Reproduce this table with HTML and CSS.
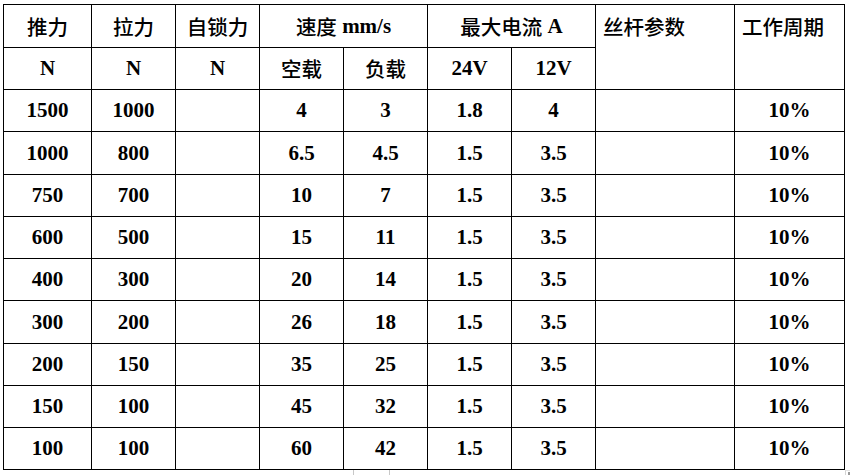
FILE: index.html
```html
<!DOCTYPE html>
<html lang="zh-CN">
<head>
<meta charset="utf-8">
<title>推拉力参数表</title>
<link rel="stylesheet" href="styles.css">
</head>
<body>
<div class="page">
  <div class="sheet">
    <div class="c"><span class="zh">推力</span></div>
    <div class="c"><span class="zh">拉力</span></div>
    <div class="c"><span class="zh">自锁力</span></div>
    <div class="c span2"><span class="zh">速度</span>&nbsp;mm/s</div>
    <div class="c span2"><span class="zh">最大电流</span>&nbsp;A</div>
    <div class="c tall"><span class="zh">丝杆参数</span></div>
    <div class="c tall"><span class="zh">工作周期</span></div>

    <div class="c">N</div>
    <div class="c">N</div>
    <div class="c">N</div>
    <div class="c"><span class="zh">空载</span></div>
    <div class="c"><span class="zh">负载</span></div>
    <div class="c">24V</div>
    <div class="c">12V</div>

    <div class="c">1500</div><div class="c">1000</div><div class="c"></div><div class="c">4</div><div class="c">3</div><div class="c">1.8</div><div class="c">4</div><div class="c"></div><div class="c">10%</div>
    <div class="c">1000</div><div class="c">800</div><div class="c"></div><div class="c">6.5</div><div class="c">4.5</div><div class="c">1.5</div><div class="c">3.5</div><div class="c"></div><div class="c">10%</div>
    <div class="c">750</div><div class="c">700</div><div class="c"></div><div class="c">10</div><div class="c">7</div><div class="c">1.5</div><div class="c">3.5</div><div class="c"></div><div class="c">10%</div>
    <div class="c">600</div><div class="c">500</div><div class="c"></div><div class="c">15</div><div class="c">11</div><div class="c">1.5</div><div class="c">3.5</div><div class="c"></div><div class="c">10%</div>
    <div class="c">400</div><div class="c">300</div><div class="c"></div><div class="c">20</div><div class="c">14</div><div class="c">1.5</div><div class="c">3.5</div><div class="c"></div><div class="c">10%</div>
    <div class="c">300</div><div class="c">200</div><div class="c"></div><div class="c">26</div><div class="c">18</div><div class="c">1.5</div><div class="c">3.5</div><div class="c"></div><div class="c">10%</div>
    <div class="c">200</div><div class="c">150</div><div class="c"></div><div class="c">35</div><div class="c">25</div><div class="c">1.5</div><div class="c">3.5</div><div class="c"></div><div class="c">10%</div>
    <div class="c">150</div><div class="c">100</div><div class="c"></div><div class="c">45</div><div class="c">32</div><div class="c">1.5</div><div class="c">3.5</div><div class="c"></div><div class="c">10%</div>
    <div class="c">100</div><div class="c">100</div><div class="c"></div><div class="c">60</div><div class="c">42</div><div class="c">1.5</div><div class="c">3.5</div><div class="c"></div><div class="c">10%</div>
  </div>
  <div class="handle-mid"></div>
  <div class="handle-corner"><span class="dot"></span></div>
</div>
</body>
</html>
```

FILE: styles.css
```css
html, body {
  margin: 0;
  padding: 0;
  background: #fff;
}

.page {
  position: relative;
  width: 850px;
  height: 475px;
  overflow: hidden;
}

.sheet {
  display: grid;
  grid-template-columns: 87px repeat(6, 83px) 138px 109px;
  grid-template-rows: 42px 41px 41px 42px 41px 41px 41px 42px 41px 41px 41px;
  gap: 1px;
  padding: 1px;
  background: #000;
  width: max-content;
  margin: 4px 0 0 3px;
  font-family: "Liberation Serif", "Noto Sans CJK SC", serif;
  font-size: 21px;
  font-weight: bold;
  color: #000;
}

.c {
  background: #fff;
  display: flex;
  align-items: center;
  justify-content: center;
  line-height: 1;
  white-space: nowrap;
}

.zh {
  font-family: "Noto Sans CJK SC", sans-serif;
  font-weight: 500;
  font-size: 20.5px;
}

.span2 {
  grid-column: span 2;
}

.tall {
  grid-row: span 2;
  align-items: flex-start;
  justify-content: flex-start;
  padding-left: 7px;
  line-height: 42px;
}

.tall .zh {
  line-height: 42px;
}

.handle-mid {
  position: absolute;
  left: 353px;
  top: 470px;
  width: 35px;
  height: 5px;
  border-left: 1px solid #c8c8c8;
  border-right: 1px solid #c8c8c8;
  border-bottom: 1px solid #ececec;
}

.handle-corner {
  position: absolute;
  left: 845px;
  top: 470px;
  width: 5px;
  height: 5px;
  border-left: 1px solid #d4d4d4;
  border-top: 1px solid #e4e4e4;
}

.handle-corner .dot {
  position: absolute;
  left: 2px;
  top: 1px;
  width: 3px;
  height: 3px;
  background: #9a9a9a;
}
```
